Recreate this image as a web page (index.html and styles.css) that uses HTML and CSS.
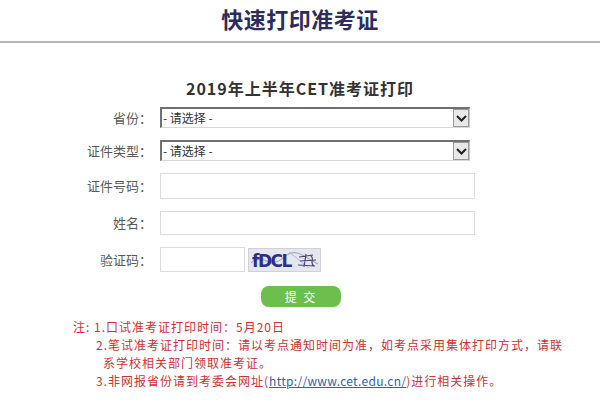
FILE: index.html
```html
<!DOCTYPE html>
<html lang="zh-CN">
<head>
<meta charset="utf-8">
<title>快速打印准考证</title>
<link rel="stylesheet" href="styles.css">
</head>
<body>
<header class="top">
  <h1 class="title">快速打印准考证</h1>
</header>
<h2 class="subtitle">2019年上半年CET准考证打印</h2>
<form class="form">
  <label class="lbl">省份：</label>
  <div class="sel">
    <span class="sel-text">- 请选择 -</span>
    <span class="sel-btn"><svg width="11" height="7" viewBox="0 0 11 7"><path d="M1 1 L5.5 5.5 L10 1" fill="none" stroke="#222" stroke-width="2"/></svg></span>
  </div>
  <label class="lbl">证件类型：</label>
  <div class="sel">
    <span class="sel-text">- 请选择 -</span>
    <span class="sel-btn"><svg width="11" height="7" viewBox="0 0 11 7"><path d="M1 1 L5.5 5.5 L10 1" fill="none" stroke="#222" stroke-width="2"/></svg></span>
  </div>
  <label class="lbl">证件号码：</label>
  <div class="inp inp-tall"></div>
  <label class="lbl">姓名：</label>
  <div class="inp"></div>
  <label class="lbl">验证码：</label>
  <div class="code-row">
    <div class="inp inp-code"></div>
    <svg class="captcha" width="71" height="22" viewBox="0 0 71 22">
      <rect x="0" y="0" width="71" height="22" fill="#e6e6ee"/>
      <path d="M2 14 C12 4, 22 20, 34 9 S52 6, 69 15" fill="none" stroke="#9a9ab8" stroke-width="1"/>
      <path d="M4 6 L30 18 M40 3 L60 19" fill="none" stroke="#b8b8cc" stroke-width="1"/>
      <text x="3" y="18" font-family="DejaVu Sans, sans-serif" font-size="17" font-weight="bold" fill="#2b2f8a" letter-spacing="-1.5">fDCL</text>
      <path d="M50 8 L64 6 M51 12 L67 11 M49 16 L66 17 M57 5 L55 18 M62 7 C66 10, 60 14, 65 17" fill="none" stroke="#4a4a7a" stroke-width="1.2"/>
    </svg>
  </div>
  <span></span>
  <div class="btn-cell"><button type="button" class="btn">提 交</button></div>
</form>
<div class="notes">
  <p class="note">注: 1.口试准考证打印时间：5月20日</p>
  <p class="note ind">2.笔试准考证打印时间：请以考点通知时间为准，如考点采用集体打印方式，请联</p>
  <p class="note ind2">系学校相关部门领取准考证。</p>
  <p class="note ind">3.非网报省份请到考委会网址(<a class="link" href="#">http://www.cet.edu.cn/</a>)进行相关操作。</p>
</div>
</body>
</html>
```
FILE: styles.css
```css
html, body {
  margin: 0;
  padding: 0;
  background: #ffffff;
}
body {
  font-family: "Noto Sans CJK SC", "Noto Sans", sans-serif;
  color: #333;
  width: 600px;
  height: 400px;
  overflow: hidden;
}
.top {
  height: 41px;
  border-bottom: 2px solid #b4b4bc;
  text-align: center;
}
.title {
  margin: 0;
  font-size: 22px;
  line-height: 36px;
  font-weight: bold;
  color: #2c2d5c;
  letter-spacing: 0.5px;
}
.subtitle {
  margin: 35px 0 0 0;
  text-align: center;
  font-size: 16px;
  line-height: 20px;
  font-weight: bold;
  color: #333;
  letter-spacing: 1px;
}
.form {
  display: grid;
  grid-template-columns: 152px 315px;
  column-gap: 8px;
  row-gap: 12px;
  margin-top: 9px;
  align-items: center;
}
.lbl {
  text-align: right;
  font-size: 13px;
  line-height: 16px;
  color: #5a5a5a;
}
.sel {
  width: 310px;
  height: 21px;
  box-sizing: border-box;
  border-top: 2px solid #707070;
  border-left: 2px solid #707070;
  border-right: 1px solid #c8c8c8;
  border-bottom: 1px solid #d8d8d8;
  display: flex;
  align-items: center;
  justify-content: space-between;
  background: #fff;
}
.sel-text {
  font-size: 12px;
  color: #333;
  padding-left: 1px;
  line-height: 16px;
}
.sel-btn {
  width: 16px;
  height: 18px;
  box-sizing: border-box;
  background: #e8e8e8;
  border: 1px solid #999;
  display: flex;
  align-items: center;
  justify-content: center;
}
.inp {
  height: 24px;
  box-sizing: border-box;
  border: 1px solid #dcdcdc;
  background: #fff;
}
.inp-tall {
  height: 26px;
}
.code-row {
  display: flex;
  align-items: center;
  gap: 3px;
}
.inp-code {
  width: 85px;
  height: 25px;
}
.captcha {
  display: block;
  border: 1px solid #d0d0d8;
}
.btn-cell {
  padding-left: 101px;
  padding-top: 2px;
}
.btn {
  display: block;
  width: 80px;
  height: 21px;
  border: none;
  border-radius: 8px;
  background: #6cbf4c;
  color: #fff;
  font-family: "Noto Sans CJK SC", sans-serif;
  font-size: 12px;
  line-height: 21px;
  padding: 0;
  letter-spacing: 2px;
}
.notes {
  margin-top: 11px;
  padding-left: 73px;
}
.note {
  margin: 0;
  font-size: 12px;
  line-height: 18px;
  letter-spacing: 1px;
  color: #d3302f;
  white-space: nowrap;
}
.ind {
  padding-left: 23px;
}
.ind2 {
  padding-left: 30px;
}
.link {
  color: #2f63b0;
  text-decoration: underline;
  letter-spacing: 0.3px;
}
```
